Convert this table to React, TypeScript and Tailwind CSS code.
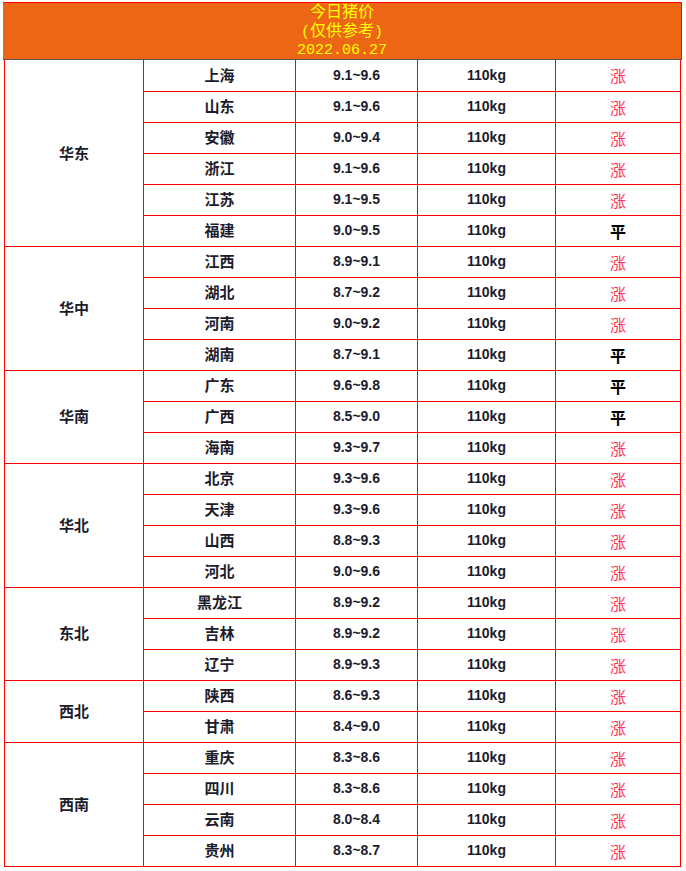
const groups: Array<{ region: string; rows: Array<[string, string, string]> }> = [
  {
    region: '华东',
    rows: [
      ['上海', '9.1~9.6', '涨'],
      ['山东', '9.1~9.6', '涨'],
      ['安徽', '9.0~9.4', '涨'],
      ['浙江', '9.1~9.6', '涨'],
      ['江苏', '9.1~9.5', '涨'],
      ['福建', '9.0~9.5', '平'],
    ],
  },
  {
    region: '华中',
    rows: [
      ['江西', '8.9~9.1', '涨'],
      ['湖北', '8.7~9.2', '涨'],
      ['河南', '9.0~9.2', '涨'],
      ['湖南', '8.7~9.1', '平'],
    ],
  },
  {
    region: '华南',
    rows: [
      ['广东', '9.6~9.8', '平'],
      ['广西', '8.5~9.0', '平'],
      ['海南', '9.3~9.7', '涨'],
    ],
  },
  {
    region: '华北',
    rows: [
      ['北京', '9.3~9.6', '涨'],
      ['天津', '9.3~9.6', '涨'],
      ['山西', '8.8~9.3', '涨'],
      ['河北', '9.0~9.6', '涨'],
    ],
  },
  {
    region: '东北',
    rows: [
      ['黑龙江', '8.9~9.2', '涨'],
      ['吉林', '8.9~9.2', '涨'],
      ['辽宁', '8.9~9.3', '涨'],
    ],
  },
  {
    region: '西北',
    rows: [
      ['陕西', '8.6~9.3', '涨'],
      ['甘肃', '8.4~9.0', '涨'],
    ],
  },
  {
    region: '西南',
    rows: [
      ['重庆', '8.3~8.6', '涨'],
      ['四川', '8.3~8.6', '涨'],
      ['云南', '8.0~8.4', '涨'],
      ['贵州', '8.3~8.7', '涨'],
    ],
  },
]

const cjk = "font-['Noto_Sans_CJK_SC',sans-serif]"
const num = "font-['Liberation_Sans',Arial,sans-serif]"
const mono = "font-['Liberation_Mono',monospace]"

export default function App() {
  return (
    <div className="min-h-screen bg-white pt-[2px]">
      <div className="ml-[3px] w-[679px]">
        <div
          className={`flex h-[58px] flex-col items-center justify-center border-t border-r border-b border-[#ff0000] border-b-[#555555] bg-[#ec6615] text-[16px] leading-[18.5px] text-[#ffff00] ${cjk}`}
        >
          <div>今日猪价</div>
          <div>
            <span className={`${mono} text-[15px]`}>(</span>仅供参考<span className={`${mono} text-[15px]`}>)</span>
          </div>
          <div className={`text-[15px] ${mono}`}>2022.06.27</div>
        </div>
        <table className="ml-[1px] w-[677px] table-fixed border-collapse">
          <colgroup>
            <col className="w-[139px]" />
            <col className="w-[152px]" />
            <col className="w-[122px]" />
            <col className="w-[138px]" />
            <col />
          </colgroup>
          <tbody>
            {groups.map(group =>
              group.rows.map(([city, price, trend], i) => (
                <tr key={city} className="h-[31px]">
                  {i === 0 && (
                    <td
                      rowSpan={group.rows.length}
                      className={`border border-t-0 border-[#ff0000] p-0 text-center text-[15px] font-bold text-[#1c1c2c] ${cjk}`}
                    >
                      {group.region}
                    </td>
                  )}
                  <td className={`border border-t-0 border-[#ff0000] p-0 text-center text-[15px] font-bold text-[#1c1c2c] ${cjk}`}>
                    {city}
                  </td>
                  <td className={`border border-t-0 border-[#ff0000] p-0 text-center text-[14px] font-bold text-[#1c1c2c] ${num}`}>
                    {price}
                  </td>
                  <td className={`border border-t-0 border-[#ff0000] p-0 text-center text-[14px] font-bold text-[#1c1c2c] ${num}`}>
                    110kg
                  </td>
                  <td
                    className={`border border-t-0 border-[#ff0000] p-0 text-center text-[16px] ${cjk} ${
                      trend === '涨' ? 'text-[#ff3355]' : 'font-bold text-black'
                    }`}
                  >
                    {trend}
                  </td>
                </tr>
              )),
            )}
          </tbody>
        </table>
      </div>
    </div>
  )
}
